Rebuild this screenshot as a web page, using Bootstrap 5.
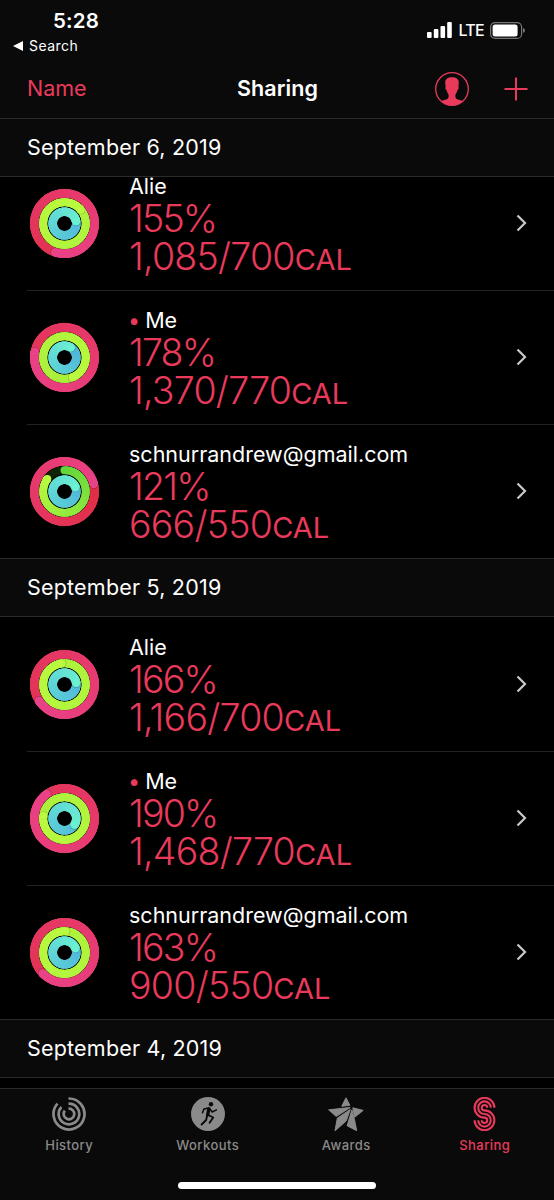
<!DOCTYPE html>
<html lang="en" data-bs-theme="dark">
<head>
<meta charset="utf-8">
<meta name="viewport" content="width=device-width, initial-scale=1">
<title>Sharing</title>
<link href="https://cdn.jsdelivr.net/npm/bootstrap@5.3.0/dist/css/bootstrap.min.css" rel="stylesheet">
<style>
  :root { --pink: #e93a5b; --bar: #0a0a0a; --line: #2a2a2a; }
  body { font-family: Inter, "Liberation Sans", sans-serif; background: #000; color: #fff; line-height: 1; }
  svg { display: block; flex: none; }
  .phone { width: 554px; height: 1200px; }
  .top-bar { height: 119px; background: var(--bar); border-bottom: 1px solid var(--line); }
  .status { height: 58px; padding: 11px 29px 0 13px; }
  .clock { font-size: 20.5px; font-weight: 600; line-height: 20px; padding-left: 40px; letter-spacing: .2px; }
  .back { font-size: 14px; line-height: 16px; margin-top: 7px; gap: 6px; letter-spacing: .45px; }
  .carrier { gap: 6px; margin-top: 11px; }
  .lte { font-size: 16px; line-height: 16px; letter-spacing: -.7px; font-weight: 500; }
  .title-bar { height: 61px; padding: 1px 26px 0 27px; }
  .side { width: 120px; }
  .sort { color: var(--pink); font-size: 21.5px; letter-spacing: 0; }
  .screen-title { font-size: 21.5px; font-weight: 600; letter-spacing: .1px; }
  .actions { gap: 35px; }
  .feed { min-height: 0; }
  .day { height: 59px; flex: none; background: var(--bar); border-bottom: 1px solid var(--line); font-size: 21.5px; padding-left: 27px; letter-spacing: .2px; }
  .day.pinned { height: 58px; padding-top: 1px; }
  .person + .day { border-top: 1px solid var(--line); }
  .person { height: 134px; flex: none; padding-left: 30px; padding-right: 27px; }
  .first { height: 113px; align-items: flex-end !important; overflow: hidden; }
  .person + .person { background: linear-gradient(#222, #222) 27px 0 / 100% 1px no-repeat; }
  .info { margin-left: 30px; height: 134px; padding-top: 18px; white-space: nowrap; }
  .first .ring { margin-bottom: 32px; }
  .first .go { margin-bottom: 58px; }
  .who { font-size: 21.5px; line-height: 24px; letter-spacing: 0; margin-bottom: 2px; }
  .dot { color: var(--pink); margin: 0 -1px; }
  .figure-line { font-size: 37.5px; font-weight: 350; line-height: 37.5px; color: var(--pink); letter-spacing: -.75px; }
  .percent { letter-spacing: -1.8px; }
  .unit { font-size: 29px; letter-spacing: 0; font-weight: 400; }
  .tabs { height: 112px; flex: none; background: var(--bar); border-top: 1px solid var(--line); color: #8a8a8a; }
  .tab { padding-top: 8px; font-size: 13px; font-weight: 500; letter-spacing: .45px; gap: 6px; line-height: 16px; }
  .tab.current { color: var(--pink); }
  .home { width: 198px; height: 7px; border-radius: 4px; background: #fff; margin-bottom: 11px; }
</style>
</head>
<body>
<div class="phone d-flex flex-column overflow-hidden">
  <header class="top-bar flex-shrink-0">
    <div class="status d-flex justify-content-between">
      <div>
        <div class="clock">5:28</div>
        <div class="back d-flex align-items-center"><svg width="10" height="10"><path d="M0 5 10 0v10z" fill="#fff"/></svg><span>Search</span></div>
      </div>
      <div class="carrier d-flex align-items-start">
        <svg width="25" height="16" fill="#fff"><rect y="10" width="4.6" height="6" rx="1"/><rect x="6.8" y="7" width="4.6" height="9" rx="1"/><rect x="13.5" y="4" width="4.6" height="12" rx="1"/><rect x="20.2" width="4.6" height="16" rx="1"/></svg>
        <span class="lte">LTE</span>
        <svg width="35" height="17"><rect x=".6" y=".6" width="31" height="15.8" rx="4.5" fill="none" stroke="#777" stroke-width="1.2"/><rect x="2.6" y="2.5" width="25" height="12" rx="2.5" fill="#fff"/><path d="M33 6q2 .8 2 2.5T33 11z" fill="#777"/></svg>
      </div>
    </div>
    <div class="title-bar d-flex align-items-center justify-content-between">
      <div class="side sort">Name</div>
      <div class="screen-title">Sharing</div>
      <div class="side actions d-flex align-items-center justify-content-end">
        <svg width="34" height="34" viewBox="0 0 34 34"><circle cx="17" cy="17" r="16.3" fill="none" stroke="#e93a5b" stroke-width="1.3"/><path d="M17 5.2c-4.4 0-6.8 2-6.8 5.4 0 1.6.2 3.2.5 4.5-.8.3-.3 2.7.8 3 .5 2.1 1.2 3.4 2 4.4.3 2.3.1 4-1.6 4.8-2.2 1-4.6 1.1-6 2 2.8 2.6 6.4 4.2 11.1 4.2s8.3-1.6 11.1-4.2c-1.4-.9-3.8-1-6-2-1.7-.8-1.9-2.5-1.600-4.800.8-1 1.500-2.300 2-4.400 1.100-.3 1.600-2.700.8-3 .3-1.300.5-2.900.5-4.500 0-3.400-2.400-5.400-6.800-5.400z" fill="#e93a5b"/></svg>
        <svg width="24" height="24"><path d="M12 .5v23M.5 12h23" stroke="#e93a5b" stroke-width="2"/></svg>
      </div>
    </div>
  </header>

  <main class="feed flex-grow-1 d-flex flex-column overflow-hidden">
    <div class="day pinned d-flex align-items-center">September 6, 2019</div>
    <div class="person first d-flex align-items-center">
      <svg class="ring" width="69" height="69" viewBox="-34.5 -34.5 69 69" data-rings="1.55 2.14 1.22"></svg>
      <div class="info"><div class="who">Alie</div><div class="figure-line percent">155%</div><div class="figure-line">1,085/700<span class="unit">CAL</span></div></div>
      <svg class="go ms-auto" width="11" height="18"><path d="M1.500 1.500 9 9l-7.500 7.500" fill="none" stroke="#c9c9cc" stroke-width="2.200"/></svg>
    </div>
    <div class="person d-flex align-items-center">
      <svg class="ring" width="69" height="69" viewBox="-34.5 -34.5 69 69" data-rings="1.78 1.44 1.09"></svg>
      <div class="info"><div class="who"><span class="dot">•</span> Me</div><div class="figure-line percent">178%</div><div class="figure-line">1,370/770<span class="unit">CAL</span></div></div>
      <svg class="go ms-auto" width="11" height="18"><path d="M1.500 1.500 9 9l-7.500 7.500" fill="none" stroke="#c9c9cc" stroke-width="2.200"/></svg>
    </div>
    <div class="person d-flex align-items-center">
      <svg class="ring" width="69" height="69" viewBox="-34.5 -34.5 69 69" data-rings="1.21 .85 1.19"></svg>
      <div class="info"><div class="who">schnurrandrew@gmail.com</div><div class="figure-line percent">121%</div><div class="figure-line">666/550<span class="unit">CAL</span></div></div>
      <svg class="go ms-auto" width="11" height="18"><path d="M1.500 1.500 9 9l-7.500 7.500" fill="none" stroke="#c9c9cc" stroke-width="2.200"/></svg>
    </div>

    <div class="day d-flex align-items-center">September 5, 2019</div>
    <div class="person d-flex align-items-center">
      <svg class="ring" width="69" height="69" viewBox="-34.5 -34.5 69 69" data-rings="1.66 1.98 1.23"></svg>
      <div class="info"><div class="who">Alie</div><div class="figure-line percent">166%</div><div class="figure-line">1,166/700<span class="unit">CAL</span></div></div>
      <svg class="go ms-auto" width="11" height="18"><path d="M1.500 1.500 9 9l-7.500 7.500" fill="none" stroke="#c9c9cc" stroke-width="2.200"/></svg>
    </div>
    <div class="person d-flex align-items-center">
      <svg class="ring" width="69" height="69" viewBox="-34.5 -34.5 69 69" data-rings="1.90 1.77 1.34"></svg>
      <div class="info"><div class="who"><span class="dot">•</span> Me</div><div class="figure-line percent">190%</div><div class="figure-line">1,468/770<span class="unit">CAL</span></div></div>
      <svg class="go ms-auto" width="11" height="18"><path d="M1.500 1.500 9 9l-7.500 7.500" fill="none" stroke="#c9c9cc" stroke-width="2.200"/></svg>
    </div>
    <div class="person d-flex align-items-center">
      <svg class="ring" width="69" height="69" viewBox="-34.5 -34.5 69 69" data-rings="1.63 2.01 1.19"></svg>
      <div class="info"><div class="who">schnurrandrew@gmail.com</div><div class="figure-line percent">163%</div><div class="figure-line">900/550<span class="unit">CAL</span></div></div>
      <svg class="go ms-auto" width="11" height="18"><path d="M1.500 1.500 9 9l-7.500 7.500" fill="none" stroke="#c9c9cc" stroke-width="2.200"/></svg>
    </div>
    <div class="day d-flex align-items-center">September 4, 2019</div>
  </main>

  <nav class="tabs d-flex flex-column justify-content-between align-items-center">
    <div class="row g-0 w-100">
      <div class="tab col-3 d-flex flex-column align-items-center">
        <svg width="34" height="34" viewBox="-17 -17 34 34" fill="none" stroke="currentColor" stroke-width="2.700"><path d="M-.5-15.500A15.500 15.500 0 1 1-11.500-10.400M-.5-10.300A10.300 10.300 0 1 1-7.600-7M-.5-5.300A5.300 5.300 0 1 1-4.200-3.300"/></svg>
        <span>History</span>
      </div>
      <div class="tab col-3 d-flex flex-column align-items-center">
        <svg width="34" height="34" viewBox="0 0 34 34"><circle cx="17" cy="17" r="17" fill="currentColor"/><circle cx="20" cy="7.200" r="2.200" fill="#0a0a0a"/><g fill="none" stroke="#0a0a0a" stroke-linecap="round" stroke-linejoin="round"><path d="m17.900 12-1.200 5.700" stroke-width="3.400"/><path d="M17.500 10.900 13 11.900l-1.500 3.800M19 12l2.200 3 4.200-2.200" stroke-width="1.500"/><path d="m17.200 18 5 2.500-3.600 5.200M16.200 18.500l-1.100 4.500-4.500 4.500" stroke-width="1.900"/></g></svg>
        <span>Workouts</span>
      </div>
      <div class="tab col-3 d-flex flex-column align-items-center">
        <svg width="36" height="34" viewBox="0 0 36 34" fill="currentColor" stroke="currentColor" stroke-width="1" stroke-linejoin="round"><path d="m18 .8 3.900 7.500-8.200 1zM.7 12.800l21.500-2.300-14 9zM24.800 10.800l10.400 2.600-8.500 6.800zM22.300 12.400 18.200 24 7 33.800 9.300 21.200zM23.900 12.900l2.400 8.800 2.400 12-9.600-4.900z"/></svg>
        <span>Awards</span>
      </div>
      <div class="tab current col-3 d-flex flex-column align-items-center">
        <svg width="24" height="34" viewBox="-11.500 -17 24 34" fill="none" stroke="currentColor" stroke-width="2.100"><path d="M6.300-6.300A6.300 6.300 0 1 0 0 0A6.300 6.300 0 1 1-6.300 6.300"/><path d="M9.900-6.300A9.900 9.900 0 1 0 0 3.600A2.700 2.700 0 1 1-2.700 6.300"/><path d="M2.700-6.300A2.700 2.700 0 1 0 0-3.600A9.900 9.900 0 1 1-9.900 6.300"/></svg>
        <span>Sharing</span>
      </div>
    </div>
    <div class="home"></div>
  </nav>
</div>
<script src="https://cdn.jsdelivr.net/npm/bootstrap@5.3.0/dist/js/bootstrap.bundle.min.js"></script>
<script>
  // Activity rings: move, exercise, stand. Each is swept from twelve o'clock, fading from one colour to the other.
  const RINGS = [
    { r: 30.2, w: 8.5, from: [222, 42, 52], to: [234, 66, 136] },
    { r: 21.3, w: 8, from: [100, 214, 60], to: [186, 250, 64] },
    { r: 11.8, w: 8.6, from: [76, 172, 220], to: [108, 240, 210] }
  ];
  const point = (r, deg) => [r * Math.sin(deg * Math.PI / 180), -r * Math.cos(deg * Math.PI / 180)].map(v => v.toFixed(2));
  document.querySelectorAll('.ring').forEach(svg => {
    let out = '';
    svg.dataset.rings.split(' ').map(Number).forEach((turns, i) => {
      const { r, w, to } = RINGS[i];
      const from = i === 1 && turns > 1 ? [160, 234, 58] : RINGS[i].from;
      const end = turns * 360, start = Math.max(0, end - 360);
      const colour = a => {
        const t = Math.min(1, Math.max(0, a / end));
        return 'rgb(' + from.map((c, k) => Math.round(c + (to[k] - c) * t)) + ')';
      };
      const track = turns < 1 ? '#0e2405' : colour((start + end) / 2);
      out += `<circle r="${r}" fill="none" stroke="${track}" stroke-width="${w}"/>`;
      if (turns < 1) { const [x, y] = point(r, 0); out += `<circle cx="${x}" cy="${y}" r="${w / 2}" fill="${colour(0)}"/>`; }
      for (let a = start; a < end; a += 3) {
        const b = Math.min(a + 7, end), p = point(r, a), q = point(r, b);
        out += `<path d="M${p}A${r} ${r} 0 0 1 ${q}" fill="none" stroke="${colour(a)}" stroke-width="${w - .2}"/>`;
      }
      const s = point(r, end + 24 / r), c = point(r, end), b = point(r, end - 6);
      if (turns > 1) out += `<circle cx="${s[0]}" cy="${s[1]}" r="${w / 2}" fill="#000" opacity=".35"/>`;
      out += `<circle cx="${c[0]}" cy="${c[1]}" r="${w / 2}" fill="${colour(end)}"/>`;
      out += `<path d="M${b}A${r} ${r} 0 0 1 ${c}" fill="none" stroke="${colour(end)}" stroke-width="${w}"/>`;
    });
    svg.innerHTML = out;
  });
</script>
</body>
</html>
